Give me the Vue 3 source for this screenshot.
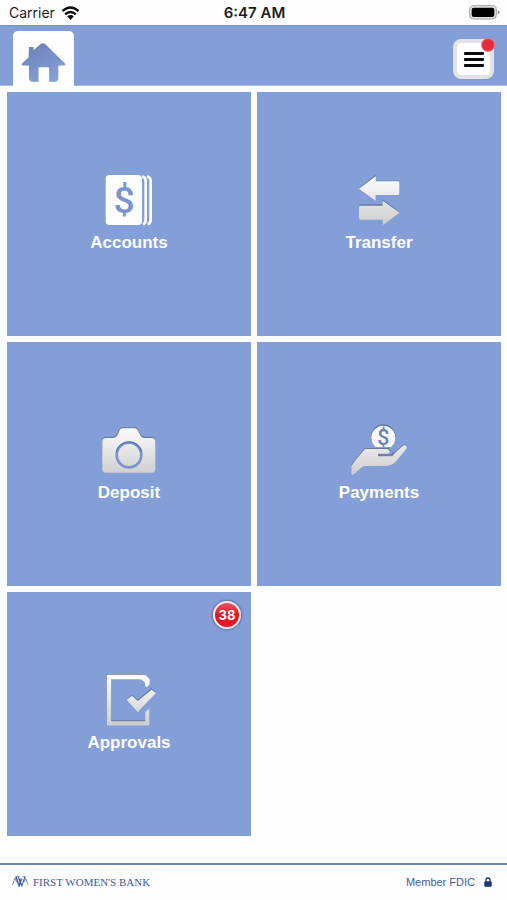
<script setup>
const tiles = [
  { id: 'accounts', label: 'Accounts' },
  { id: 'transfer', label: 'Transfer' },
  { id: 'deposit', label: 'Deposit' },
  { id: 'payments', label: 'Payments' },
  { id: 'approvals', label: 'Approvals', badge: 38 },
]
</script>

<template>
  <div class="app">
    <div class="status">
      <div class="carrier">
        <span>Carrier</span>
        <svg class="wifi" viewBox="0 0 54 42" aria-hidden="true">
          <g fill="none" stroke="#0b0b0d" stroke-width="7">
            <path d="M3 15Q27 -6 51 15" />
            <path d="M11 25Q27 11 43 25" />
          </g>
          <path d="M17 31Q27 23 37 31L27 42Z" fill="#0b0b0d" />
        </svg>
      </div>
      <div class="time">6:47 AM</div>
      <svg class="battery" viewBox="0 0 93 45" aria-hidden="true">
        <rect x="2" y="2" width="80" height="40" rx="12" fill="#e4e4e4" stroke="#a0a0a0" stroke-width="3" />
        <rect x="8" y="8" width="68" height="28" rx="6" fill="#000" />
        <path d="M86 15Q92 18 92 22Q92 26 86 29Z" fill="#999" />
      </svg>
    </div>

    <header class="bar">
      <a class="home" href="#" aria-label="Home">
        <svg viewBox="0 0 136 118" aria-hidden="true">
          <defs>
            <linearGradient id="house" x1="0" y1="0" x2="0.6" y2="1">
              <stop offset="0" stop-color="#6a80b3" />
              <stop offset="1" stop-color="#849ed8" />
            </linearGradient>
          </defs>
          <path
            d="M24 12H38V22L59 3Q66 -2 73 3L133 62Q136 67 130 68H113V105Q113 117 102 117H85V76Q85 73 81 73H57Q53 73 53 76V117H35Q24 117 24 105V68H5Q0 67 3 62L23 43Z"
            fill="url(#house)"
          />
        </svg>
      </a>
      <button class="menu" type="button" aria-label="Menu">
        <span class="line"></span>
        <span class="line"></span>
        <span class="line"></span>
        <span class="dot"></span>
      </button>
    </header>

    <main class="grid">
      <a v-for="t in tiles" :key="t.id" class="tile" href="#">
        <svg class="icon" viewBox="57 27 180 162" aria-hidden="true">
          <defs>
            <linearGradient :id="'silver-' + t.id" gradientUnits="userSpaceOnUse" x1="0" y1="30" x2="0" y2="182">
              <stop offset="0" stop-color="#ffffff" />
              <stop offset="1" stop-color="#cdcdcd" />
            </linearGradient>
          </defs>

          <g v-if="t.id === 'accounts'">
            <rect x="77" y="30" width="109" height="150" rx="12" fill="#fff" />
            <g fill="none" stroke="#fff" stroke-width="8">
              <path d="M187 34Q197 38 197 48V164Q197 174 189 178" />
              <path d="M201 34Q212 38 212 48V164Q212 174 203 178" />
            </g>
            <text x="132" y="143" text-anchor="middle" class="sign big">$</text>
          </g>

          <g v-else-if="t.id === 'transfer'">
            <g fill="#65799f">
              <path d="M87 69L137 29V47H204Q208 47 208 51V87L137 87V104Z" />
              <path d="M87 122Q87 118 91 118H158V103L209 142L158 180V162H91Q87 162 87 158Z" />
            </g>
            <g fill="url(#silver-transfer)">
              <path d="M87 71L137 34V49H204Q208 49 208 53V86Q208 90 204 90H137V107Z" />
              <path d="M87 126Q87 122 91 122H158V107L209 143L158 181V164H91Q87 164 87 160Z" />
            </g>
          </g>

          <g v-else-if="t.id === 'deposit'">
            <path d="M67 79Q67 66 78 66H98Q108 66 112 55L117 43Q120 37 127 37H164Q171 37 174 43L181 57Q185 66 194 66H214Q226 66 226 79V100H67Z" fill="#65799f" />
            <path d="M67 81Q67 69 78 69H98Q110 69 114 58L119 45Q121 40 127 40H164Q170 40 173 45L180 59Q185 69 194 69H214Q226 69 226 81V162Q226 173 215 173H78Q67 173 67 162Z" fill="url(#silver-deposit)" />
            <circle cx="147" cy="120" r="37" fill="none" stroke="#7895d0" stroke-width="8" />
            <path d="M109 111A39 39 0 0 1 185 111" fill="none" stroke="#6079ae" stroke-width="4" />
          </g>

          <g v-else-if="t.id === 'payments'">
            <path d="M137 94A37 37 0 1 1 183 94Z" fill="#65799f" />
            <path d="M137 96A36 36 0 1 1 183 96Z" fill="#fafafa" />
            <text x="160" y="91" text-anchor="middle" class="sign small">$</text>
            <path d="M64 149L79 129L104 99H174Q182 101 182 110H150V124H183Q190 122 194 112L218 90Q224 86 230 92L228 103L185 140L100 140L64 170Z" fill="#65799f" />
            <path
              d="M64 153L79 132L105 102H170Q179 103 179 110Q179 116 170 116H144V124H183Q190 124 194 115L218 93Q224 89 229 93Q232 98 228 103L197 140Q188 150 175 152L143 153H107Q99 153 93 159L71 178Q64 182 64 173Z"
              fill="url(#silver-payments)"
            />
            <path d="M144 120H181Q187 120 191 110" fill="none" stroke="#65799f" stroke-width="4" />
          </g>

          <g v-else>
            <g fill="none">
              <path d="M202 64V54L188 36H87V176H202V137" stroke="#65799f" stroke-width="14" transform="translate(0 -3)" />
              <path d="M202 68V54L188 36H87V175H202V128" stroke="url(#silver-approvals)" stroke-width="13" />
            </g>
            <path d="M191 29H205L216 41V59L202 76L189 64V49Z" fill="#849ed8" />
            <path d="M179 30H196L209 43V58L200 67L195 62V53L184 43H179Z" fill="url(#silver-approvals)" />
            <path d="M192 123L211 121V129L192 143Z" fill="#849ed8" />
            <path d="M141 101L156 89L173 104L214 70L228 82L173 140Z" fill="#65799f" />
            <path d="M140 104L156 92L173 108L215 74L228 84L173 141Z" fill="url(#silver-approvals)" />
          </g>
        </svg>
        <span class="label">{{ t.label }}</span>
        <span v-if="t.badge" class="badge">{{ t.badge }}</span>
      </a>
    </main>

    <footer class="footer">
      <div class="brand">
        <svg class="mark" viewBox="0 0 48 32" fill="none" stroke="#3f5a9e" aria-hidden="true">
          <path d="M1 26L8 6L13 18" stroke-width="2" />
          <path d="M11 2L20 29L27 9" stroke-width="4" />
          <path d="M17 2L25 24M21 9L28 29L37 2" stroke-width="3" />
          <path d="M9 2H21M30 2H39M20 9H30" stroke-width="2" />
          <path d="M35 18L39 7L46 26" stroke-width="2" />
        </svg>
        <span>FIRST WOMEN'S BANK</span>
      </div>
      <div class="member">
        <span>Member FDIC</span>
        <svg class="lock" viewBox="0 0 24 30" aria-hidden="true">
          <path d="M6 14V9Q6 3 12 3Q18 3 18 9V14" fill="none" stroke="#1d3474" stroke-width="4" />
          <rect x="1" y="13" width="22" height="16" rx="3" fill="#1d3474" />
        </svg>
      </div>
    </footer>
  </div>
</template>

<style>
body {
  margin: 0;
  background: #fefefe;
}
</style>

<style scoped>
.app {
  display: flex;
  flex-direction: column;
  min-height: 100vh;
  font-family: "Liberation Sans", Arial, sans-serif;
}
.status {
  display: grid;
  grid-template-columns: 1fr auto 1fr;
  align-items: center;
  height: 25px;
  padding: 0 7px 0 9px;
  box-sizing: border-box;
  font-family: Inter, sans-serif;
  font-size: 14px;
  line-height: 18px;
  color: #1c1c1e;
}
.carrier {
  display: flex;
  align-items: center;
  gap: 6px;
}
.wifi {
  width: 19px;
  height: 14px;
}
.time {
  font-size: 15px;
  font-weight: 600;
}
.battery {
  width: 31px;
  height: 15px;
  justify-self: end;
}
.bar {
  display: flex;
  justify-content: space-between;
  align-items: flex-end;
  height: 61px;
  padding: 0 13px;
  box-sizing: border-box;
  background: #849ed8;
  border-top: 1px solid #7890c6;
  border-bottom: 1px solid #a9bce4;
}
.home {
  display: flex;
  justify-content: center;
  align-items: center;
  width: 61px;
  height: 55px;
  background: #fefefe;
  border-radius: 5px 5px 0 0;
  margin-bottom: -1px;
}
.home svg {
  width: 45px;
  height: 39px;
  margin-top: 8px;
}
.menu {
  position: relative;
  display: flex;
  flex-direction: column;
  justify-content: center;
  align-items: center;
  gap: 3px;
  width: 41px;
  height: 40px;
  margin-bottom: 6px;
  padding: 0;
  border: 4px solid #e2e3e6;
  border-radius: 8px;
  background: #fff;
  box-shadow: 0 0 1px #7d8cab;
}
.line {
  width: 20px;
  height: 3px;
  border-radius: 1px;
  background: #0b0b0d;
}
.dot {
  position: absolute;
  top: -5px;
  right: -5px;
  width: 12px;
  height: 12px;
  border-radius: 50%;
  background: #e82c3e;
  border: 1px solid #ec7785;
}
.grid {
  display: grid;
  grid-template-columns: 1fr 1fr;
  gap: 6px;
  padding: 6px 6px 20px 7px;
}
.tile {
  position: relative;
  display: flex;
  flex-direction: column;
  justify-content: center;
  align-items: center;
  gap: 4px;
  aspect-ratio: 1;
  background: #849ed8;
  color: #fff;
  text-decoration: none;
}
.icon {
  width: 60px;
  height: 54px;
}
.sign {
  font-family: Roboto, sans-serif;
  font-weight: 500;
  fill: #7893cd;
}
.big {
  font-size: 112px;
}
.small {
  font-size: 64px;
  fill: #6883bb;
}
.label {
  font-size: 17px;
  line-height: 22px;
  font-weight: 700;
}
.badge {
  position: absolute;
  top: 9px;
  right: 10px;
  width: 24px;
  height: 24px;
  border: 2px solid #f6e6ea;
  border-radius: 50%;
  background: linear-gradient(#e8525f, #e01828 50%, #e01828);
  box-shadow: 0 0 2px 1px #5e6fa0;
  font-family: Inter, sans-serif;
  font-size: 13px;
  line-height: 24px;
  font-weight: 700;
  text-align: center;
}
.footer {
  display: flex;
  justify-content: space-between;
  align-items: center;
  height: 37px;
  margin-top: auto;
  padding: 0 15px 2px 12px;
  box-sizing: border-box;
  border-top: 2px solid #6b82b5;
  color: #3f5a9e;
}
.brand,
.member {
  display: flex;
  align-items: center;
  gap: 4px;
  font-size: 11px;
  line-height: 14px;
}
.brand {
  font-family: "Liberation Serif", serif;
}
.mark {
  width: 17px;
  height: 11px;
}
.member {
  gap: 9px;
}
.lock {
  width: 8px;
  height: 10px;
}
</style>
